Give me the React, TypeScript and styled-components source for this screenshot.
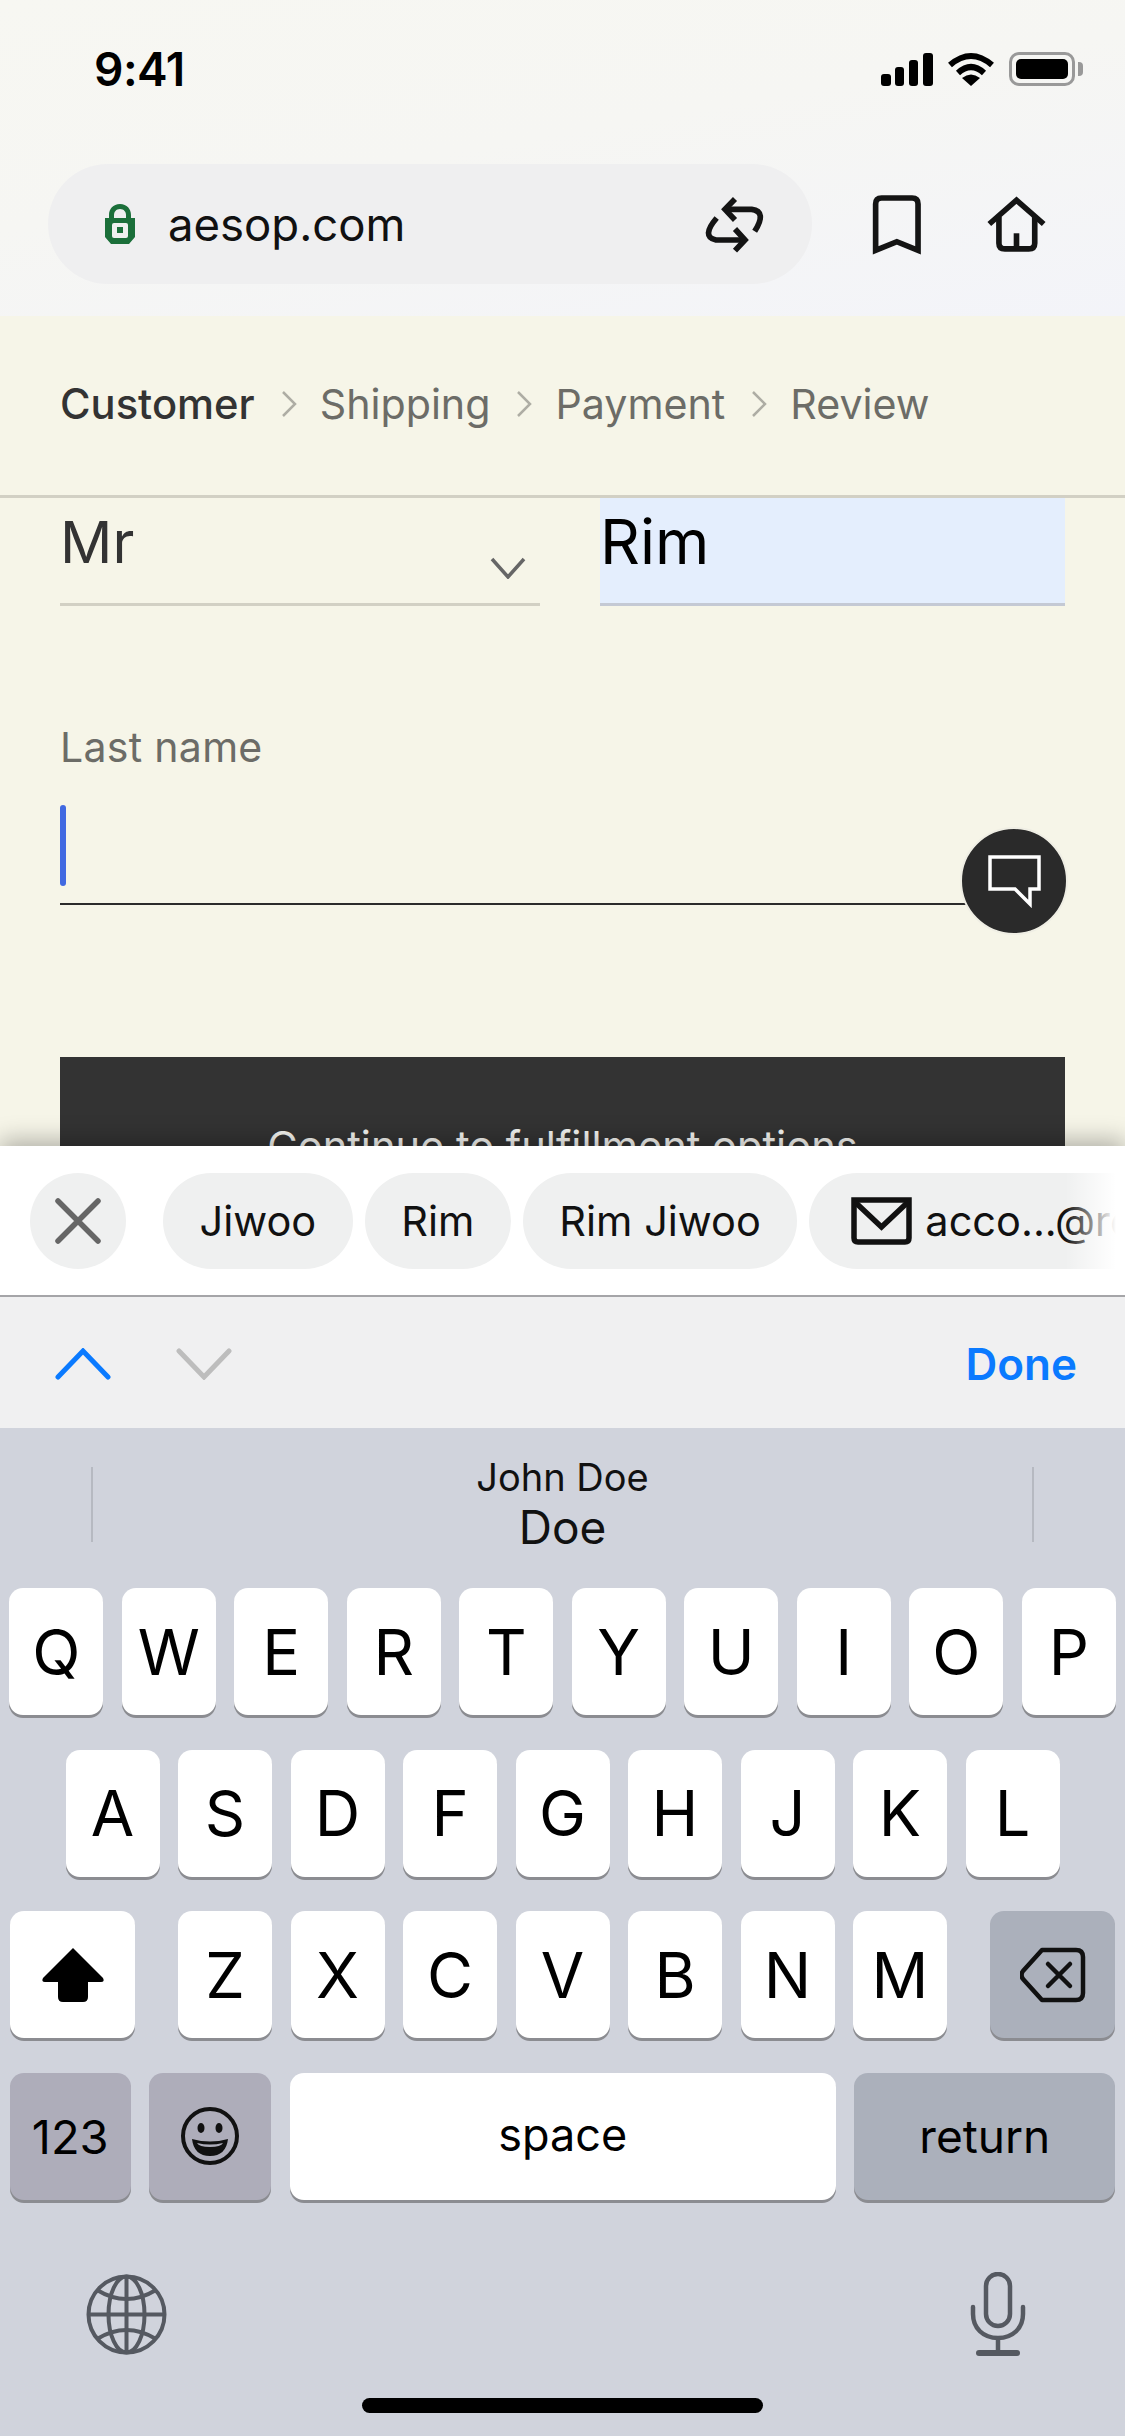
import React from "react";
import styled, { createGlobalStyle } from "styled-components";

const GlobalStyle = createGlobalStyle`
    html, body {
        margin: 0;
        padding: 0;
        background: #d0d3dc;
    }
    * {
        box-sizing: border-box;
    }
`;

const Screen = styled.div`
    width: 1125px;
    height: 2436px;
    display: flex;
    flex-direction: column;
    overflow: hidden;
    font-family: Inter, "Liberation Sans", sans-serif;
    color: #000;
`;

/* browser chrome */
const Chrome = styled.header`
    height: 316px;
    flex: none;
    background: linear-gradient(170deg, #f7f7f2 0%, #f6f6f3 45%, #f3f4f9 100%);
`;
const StatusBar = styled.div`
    height: 138px;
    padding: 0 50px 0 94px;
    display: flex;
    align-items: center;
    justify-content: space-between;
`;
const Time = styled.span`
    font-size: 46px;
    font-weight: 600;
    letter-spacing: -0.5px;
`;
const StatusIcons = styled.div`
    display: flex;
    align-items: center;
    gap: 15px;
`;
const Battery = styled.div`
    width: 66px;
    height: 34px;
    padding: 4px;
    border: 3px solid #999;
    border-radius: 10px;
    position: relative;
    &::before {
        content: "";
        display: block;
        height: 100%;
        background: #000;
        border-radius: 5px;
    }
    &::after {
        content: "";
        position: absolute;
        right: -11px;
        top: 7px;
        width: 5px;
        height: 14px;
        background: #999;
        border-radius: 0 4px 4px 0;
    }
`;
const NavRow = styled.div`
    margin-top: 26px;
    padding-left: 48px;
    display: flex;
    align-items: center;
`;
const AddressBar = styled.div`
    width: 764px;
    height: 120px;
    padding: 0 42px 0 57px;
    border-radius: 60px;
    background: #efeff0;
    display: flex;
    align-items: center;
`;
const Url = styled.span`
    margin-left: 33px;
    flex: 1;
    font-size: 45.5px;
    color: #111;
`;
const NavButton = styled.div<{ $gap: number }>`
    margin-left: ${(p) => p.$gap}px;
    display: flex;
`;

/* checkout page */
const Breadcrumbs = styled.nav`
    height: 182px;
    flex: none;
    padding: 0 60px 3px;
    display: flex;
    align-items: center;
    background: #f6f5e8;
    border-bottom: 3px solid #d2d0c4;
`;
const Crumb = styled.span<{ $active?: boolean }>`
    font-size: ${(p) => (p.$active ? 41.7 : 41.2)}px;
    font-weight: ${(p) => (p.$active ? 500 : 400)};
    color: ${(p) => (p.$active ? "#333" : "#6c6c67")};
`;
const CrumbArrow = styled.svg`
    margin: 0 23px 0 26px;
    flex: none;
`;
const Form = styled.main`
    flex: 1;
    min-height: 0;
    padding: 0 60px;
    background: #f6f5e8;
    overflow: hidden;
`;
const NameRow = styled.div`
    display: grid;
    grid-template-columns: 480px 465px;
    column-gap: 60px;
    margin-top: -3px;
`;
const SelectField = styled.div`
    height: 111px;
    padding-right: 14px;
    display: flex;
    justify-content: space-between;
    align-items: flex-start;
    border-bottom: 3px solid #d2d0c4;
`;
const FilledField = styled.div`
    height: 111px;
    background: #e4eefd;
    border-bottom: 3px solid #c4c9d4;
`;
const FieldValue = styled.div<{ $filled?: boolean }>`
    font-size: ${(p) => (p.$filled ? 62 : 58)}px;
    line-height: 70px;
    padding-top: 12px;
    color: ${(p) => (p.$filled ? "#000" : "#333")};
`;
const SelectArrow = styled.svg`
    margin-top: 62px;
`;
const LastNameLabel = styled.label`
    display: block;
    margin-top: 116px;
    font-size: 41px;
    line-height: 50px;
    letter-spacing: 0.3px;
    color: #6c6c67;
`;
const InputField = styled.div`
    position: relative;
    width: 920px;
    height: 117px;
    margin-top: 16px;
    padding-top: 17px;
    border-bottom: 2px solid #2b2b2b;
`;
const Caret = styled.div`
    width: 6px;
    height: 81px;
    background: #4169e1;
    border-radius: 3px;
`;
const FeedbackBubble = styled.div`
    position: absolute;
    right: -88px;
    top: 39px;
    width: 108px;
    height: 108px;
    display: flex;
    align-items: center;
    justify-content: center;
    border-radius: 50%;
    background: #2a2a2a;
    border: 2px solid #efeee4;
`;
const SubmitButton = styled.div`
    height: 178px;
    margin-top: 152px;
    display: flex;
    align-items: center;
    justify-content: center;
    background: #333;
    color: #f4f4f0;
    font-size: 41.6px;
`;

/* keyboard panel */
const KeyboardPanel = styled.section`
    flex: none;
    height: 1290px;
    position: relative;
    display: flex;
    flex-direction: column;
    background: #d0d3dc;
    box-shadow: 0 -6px 22px rgba(0, 0, 0, 0.28);
`;
const AutofillBar = styled.div`
    height: 151px;
    flex: none;
    padding: 27px 0 0 30px;
    display: flex;
    gap: 12px;
    overflow: hidden;
    position: relative;
    background: #fff;
    border-bottom: 2px solid #a5a5a8;
    &::after {
        content: "";
        position: absolute;
        right: 0;
        top: 0;
        bottom: 0;
        width: 60px;
        background: linear-gradient(to right, rgba(255, 255, 255, 0), #fff 85%);
    }
`;
const CloseChip = styled.div`
    width: 96px;
    height: 96px;
    margin-right: 25px;
    flex: none;
    display: flex;
    align-items: center;
    justify-content: center;
    border-radius: 50%;
    background: #eff0f0;
`;
const Chip = styled.div<{ $pad?: number }>`
    height: 96px;
    padding: 0 ${(p) => p.$pad ?? 36.5}px;
    flex: none;
    display: flex;
    align-items: center;
    gap: 13px;
    border-radius: 48px;
    background: #eff0f0;
    font-size: 41.5px;
    color: #111;
`;
const AccessoryBar = styled.div`
    height: 131px;
    flex: none;
    padding: 2px 48px 0 55px;
    display: flex;
    align-items: center;
    gap: 65px;
    background: #f0f0f1;
`;
const DoneButton = styled.span`
    margin-left: auto;
    font-size: 44px;
    font-weight: 600;
    color: #0a7aff;
`;
const Predictions = styled.div`
    height: 160px;
    flex: none;
    padding: 39px 91px 46px;
    display: flex;
    justify-content: space-between;
`;
const Divider = styled.div`
    width: 2px;
    background: #b6b9c1;
`;
const PredictionText = styled.div`
    display: flex;
    flex-direction: column;
    align-items: center;
    margin-top: -12px;
    color: #111;
`;
const PredictionHint = styled.span`
    font-size: 38px;
    line-height: 44px;
`;
const PredictionWord = styled.span`
    font-size: 46px;
    line-height: 56px;
`;
const KeyRows = styled.div`
    display: flex;
    flex-direction: column;
    gap: 34.5px;
    padding: 0 9px;
`;
const KeyRow = styled.div<{ $gap: number }>`
    display: flex;
    justify-content: center;
    gap: ${(p) => p.$gap}px;
`;
const Key = styled.div<{ $width: number; $tone?: "white" | "gray" | "mauve"; $size?: number; $lift?: number }>`
    width: ${(p) => p.$width}px;
    height: 127px;
    flex: none;
    padding-bottom: ${(p) => p.$lift ?? 0}px;
    display: flex;
    align-items: center;
    justify-content: center;
    border-radius: 14px;
    background: ${(p) =>
        p.$tone === "gray" ? "#abb0bb" : p.$tone === "mauve" ? "#aeadba" : "#fff"};
    box-shadow: 0 3px 0 #8b8c91;
    font-size: ${(p) => p.$size ?? 63}px;
    color: #000;
`;
const ShiftKey = styled(Key)`
    margin-right: 24.5px;
`;
const DeleteKey = styled(Key)`
    margin-left: 24.5px;
`;
const KeyboardFooter = styled.div`
    margin-top: 72.5px;
    padding: 0 99px 0 86px;
    display: flex;
    justify-content: space-between;
    align-items: center;
`;
const HomeBar = styled.div`
    width: 401px;
    height: 15px;
    margin: 42px auto 0;
    border-radius: 8px;
    background: #000;
`;

const SignalIcon = () => (
    <svg width="52" height="33" viewBox="0 0 52 33">
        <rect x="0" y="21" width="10" height="12" rx="3" />
        <rect x="14" y="14" width="9" height="19" rx="3" />
        <rect x="28" y="7" width="9" height="26" rx="3" />
        <rect x="42" y="0" width="10" height="33" rx="3" />
    </svg>
);

const WifiIcon = () => (
    <svg width="46" height="34" viewBox="0 0 46 34" fill="none" stroke="#000" strokeWidth="6">
        <path d="M2 13 Q23 -5 44 13" />
        <path d="M10 21 Q23 9 36 21" />
        <path d="M23 34 L14 26 Q23 19 32 26 Z" fill="#000" stroke="none" />
    </svg>
);

const LockIcon = () => (
    <svg width="30" height="40" viewBox="0 0 30 40">
        <path
            d="M15 0 C8 0 4 5 4 11 V14 H0 V33 L6 40 H24 L30 33 V14 H26 V11 C26 5 22 0 15 0 Z M15 5 C19 5 21 8 21 11 V14 H9 V11 C9 8 11 5 15 5 Z"
            fill="#1b6f3a"
            fillRule="evenodd"
        />
        <rect x="7" y="19" width="16" height="15" rx="2" fill="#eef0ee" />
        <rect x="12" y="23" width="6" height="6" fill="#1b6f3a" />
    </svg>
);

const SwapIcon = () => (
    <svg width="70" height="60" viewBox="60 40 210 180" fill="none" stroke="#141414" strokeWidth="17">
        <path d="M165 55 L135 86 L165 118" />
        <path d="M135 86 H215 Q262 92 224 152" />
        <path d="M110 112 Q62 168 108 178 H190" />
        <path d="M165 145 L195 178 L165 210" />
    </svg>
);

const BookmarkIcon = () => (
    <svg width="53" height="63" viewBox="570 35 160 190" fill="none" stroke="#141414" strokeWidth="17">
        <path d="M587 208 V68 Q587 50 605 50 H697 Q715 50 715 68 V208 L651 182 Z" />
    </svg>
);

const HomeIcon = () => (
    <svg width="63" height="60" viewBox="915 40 190 180" fill="none" stroke="#141414" strokeWidth="17">
        <path d="M928 130 L1010 58 L1092 130" />
        <path d="M957 108 V188 Q957 205 975 205 H1047 Q1065 205 1065 188 V108" />
        <path d="M1010 158 V205" />
    </svg>
);

const ChatIcon = () => (
    <svg width="53" height="53" viewBox="0 0 53 53" fill="none" stroke="#fff" strokeWidth="3.5">
        <path d="M2 2 H51 V34 H42 V49 L27 34 H2 Z" />
    </svg>
);

const Chevron = ({ up, color }: { up?: boolean; color: string }) => (
    <svg width="56" height="32" viewBox="0 0 56 32" fill="none" stroke={color} strokeWidth="5" strokeLinecap="round">
        <path d={up ? "M3 29 L28 3 L53 29" : "M3 3 L28 29 L53 3"} />
    </svg>
);

const EnvelopeIcon = () => (
    <svg width="61" height="48" viewBox="0 0 61 48" fill="none" stroke="#111" strokeWidth="5.5">
        <path d="M3 3 H58 V41 Q58 45 54 45 H7 Q3 45 3 41 Z" />
        <path d="M4 5 L30.5 30 L57 5" />
    </svg>
);

const ShiftIcon = () => (
    <svg width="64" height="56" viewBox="0 0 64 56">
        <path
            d="M32 1 L62 31 Q64 35 60 35 H47 V50 Q47 55 42 55 H22 Q17 55 17 50 V35 H4 Q0 35 2 31 Z"
            fill="#000"
        />
    </svg>
);

const BackspaceIcon = () => (
    <svg width="66" height="56" viewBox="0 0 66 56" fill="none" stroke="#111" strokeWidth="4.5" strokeLinecap="round">
        <path
            d="M22 3 H56 Q63 3 63 10 V46 Q63 53 56 53 H22 L3 32 Q0 28 3 24 Z"
            strokeLinejoin="round"
        />
        <path d="M28 17 L50 39 M50 17 L28 39" />
    </svg>
);

const EmojiIcon = () => (
    <svg width="60" height="60" viewBox="0 0 60 60">
        <circle cx="30" cy="30" r="27" fill="none" stroke="#111" strokeWidth="4" />
        <ellipse cx="21" cy="22" rx="3.5" ry="5" fill="#111" />
        <ellipse cx="39" cy="22" rx="3.5" ry="5" fill="#111" />
        <path d="M12 33 Q30 38 48 33 Q46 50 30 50 Q14 50 12 33 Z" fill="#111" />
        <path d="M17 37 Q30 40 43 37 Q41 41 30 41 Q19 41 17 37 Z" fill="#aeadba" />
    </svg>
);

const GlobeIcon = () => (
    <svg width="81" height="81" viewBox="0 0 81 81" fill="none" stroke="#555961" strokeWidth="4">
        <circle cx="40.5" cy="40.5" r="38" />
        <ellipse cx="40.5" cy="40.5" rx="18" ry="38" />
        <path d="M40.5 2.5 V78.5 M2.5 40.5 H78.5" />
        <path d="M11 16 Q40.5 34 70 16 M11 65 Q40.5 47 70 65" />
    </svg>
);

const MicIcon = () => (
    <svg width="56" height="84" viewBox="0 0 56 84" fill="none" stroke="#555961" strokeWidth="4.5">
        <rect x="16" y="2" width="24" height="52" rx="12" />
        <path d="M3 35 V42 C3 56 13 66 28 66 C43 66 53 56 53 42 V35" strokeLinecap="round" />
        <path d="M28 66 V80" />
        <path d="M9 81 H47" strokeWidth="6" strokeLinecap="round" />
    </svg>
);

const topRow = ["Q", "W", "E", "R", "T", "Y", "U", "I", "O", "P"];
const middleRow = ["A", "S", "D", "F", "G", "H", "J", "K", "L"];
const bottomRow = ["Z", "X", "C", "V", "B", "N", "M"];
const steps = ["Shipping", "Payment", "Review"];

const App: React.FC = () => {
    return (
        <>
            <GlobalStyle />
            <Screen>
                <Chrome>
                    <StatusBar>
                        <Time>9:41</Time>
                        <StatusIcons>
                            <SignalIcon />
                            <WifiIcon />
                            <Battery />
                        </StatusIcons>
                    </StatusBar>
                    <NavRow>
                        <AddressBar>
                            <LockIcon />
                            <Url>aesop.com</Url>
                            <SwapIcon />
                        </AddressBar>
                        <NavButton $gap={58}>
                            <BookmarkIcon />
                        </NavButton>
                        <NavButton $gap={62}>
                            <HomeIcon />
                        </NavButton>
                    </NavRow>
                </Chrome>

                <Breadcrumbs>
                    <Crumb $active>Customer</Crumb>
                    {steps.map((step) => (
                        <React.Fragment key={step}>
                            <CrumbArrow width="16" height="28" viewBox="0 0 16 28" fill="none" stroke="#aeada4" strokeWidth="2.5">
                                <path d="M2 2 L14 14 L2 26" />
                            </CrumbArrow>
                            <Crumb>{step}</Crumb>
                        </React.Fragment>
                    ))}
                </Breadcrumbs>

                <Form>
                    <NameRow>
                        <SelectField>
                            <FieldValue>Mr</FieldValue>
                            <SelectArrow width="36" height="22" viewBox="0 0 36 22" fill="none" stroke="#666" strokeWidth="3.5">
                                <path d="M2 2 L18 20 L34 2" />
                            </SelectArrow>
                        </SelectField>
                        <FilledField>
                            <FieldValue $filled>Rim</FieldValue>
                        </FilledField>
                    </NameRow>
                    <LastNameLabel>Last name</LastNameLabel>
                    <InputField>
                        <Caret />
                        <FeedbackBubble>
                            <ChatIcon />
                        </FeedbackBubble>
                    </InputField>
                    <SubmitButton>Continue to fulfillment options</SubmitButton>
                </Form>

                <KeyboardPanel>
                    <AutofillBar>
                        <CloseChip>
                            <svg width="46" height="46" viewBox="0 0 46 46" fill="none" stroke="#666" strokeWidth="5.5" strokeLinecap="round">
                                <path d="M3 3 L43 43 M43 3 L3 43" />
                            </svg>
                        </CloseChip>
                        <Chip>Jiwoo</Chip>
                        <Chip>Rim</Chip>
                        <Chip>Rim Jiwoo</Chip>
                        <Chip $pad={42}>
                            <EnvelopeIcon />
                            acco...@re
                        </Chip>
                    </AutofillBar>
                    <AccessoryBar>
                        <Chevron up color="#0a7aff" />
                        <Chevron color="#bdbdbd" />
                        <DoneButton>Done</DoneButton>
                    </AccessoryBar>
                    <Predictions>
                        <Divider />
                        <PredictionText>
                            <PredictionHint>John Doe</PredictionHint>
                            <PredictionWord>Doe</PredictionWord>
                        </PredictionText>
                        <Divider />
                    </Predictions>
                    <KeyRows>
                        <KeyRow $gap={18.5}>
                            {topRow.map((k) => (
                                <Key key={k} $width={94}>{k}</Key>
                            ))}
                        </KeyRow>
                        <KeyRow $gap={18.5}>
                            {middleRow.map((k) => (
                                <Key key={k} $width={94}>{k}</Key>
                            ))}
                        </KeyRow>
                        <KeyRow $gap={18.5}>
                            <ShiftKey $width={125}>
                                <ShiftIcon />
                            </ShiftKey>
                            {bottomRow.map((k) => (
                                <Key key={k} $width={94}>{k}</Key>
                            ))}
                            <DeleteKey $width={125} $tone="gray">
                                <BackspaceIcon />
                            </DeleteKey>
                        </KeyRow>
                        <KeyRow $gap={18.5}>
                            <Key $width={121} $tone="mauve" $size={47}>123</Key>
                            <Key $width={122} $tone="mauve">
                                <EmojiIcon />
                            </Key>
                            <Key $width={546} $size={45} $lift={4}>space</Key>
                            <Key $width={261} $tone="gray" $size={46}>return</Key>
                        </KeyRow>
                    </KeyRows>
                    <KeyboardFooter>
                        <GlobeIcon />
                        <MicIcon />
                    </KeyboardFooter>
                    <HomeBar />
                </KeyboardPanel>
            </Screen>
        </>
    );
};

export default App;
